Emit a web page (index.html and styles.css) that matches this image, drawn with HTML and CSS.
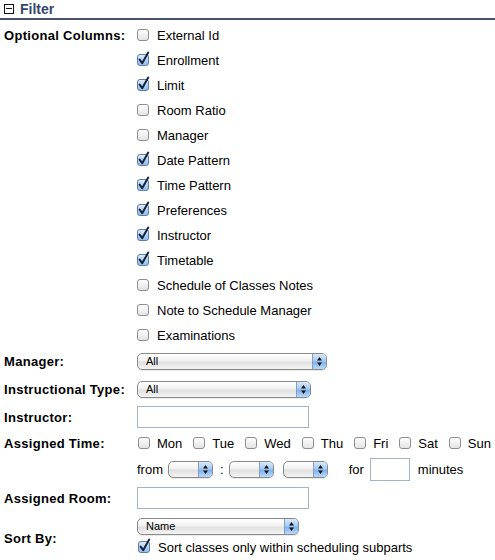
FILE: index.html
```html
<!DOCTYPE html>
<html>
<head>
<meta charset="utf-8">
<link rel="stylesheet" href="styles.css">
</head>
<body>
<svg class="defs" width="0" height="0">
  <defs>
    <linearGradient id="gOff" x1="0" y1="0" x2="0" y2="1">
      <stop offset="0" stop-color="#ffffff"/>
      <stop offset="1" stop-color="#e2e2e2"/>
    </linearGradient>
    <linearGradient id="gOn" x1="0" y1="0" x2="0" y2="1">
      <stop offset="0" stop-color="#e4effb"/>
      <stop offset="0.5" stop-color="#b5d2f1"/>
      <stop offset="1" stop-color="#8ebbec"/>
    </linearGradient>
    <symbol id="cbOff" viewBox="0 0 12 12">
      <rect x="0.5" y="0.5" width="11" height="11" rx="2.5" fill="url(#gOff)" stroke="#8e8e8e"/>
    </symbol>
    <symbol id="cbOn" viewBox="0 0 12 12" overflow="visible">
      <rect x="0.5" y="0.5" width="11" height="11" rx="2.5" fill="url(#gOn)" stroke="#5e7ea8"/>
      <path d="M2.6 5.6 L5.2 9.2 L11.2 -1.4" fill="none" stroke="#16233f" stroke-width="2" stroke-linecap="round" stroke-linejoin="round"/>
    </symbol>
    <symbol id="arrows" viewBox="0 0 7 11">
      <path d="M3.5 1 L6 4.5 L1 4.5 Z M3.5 10 L6 6.5 L1 6.5 Z" fill="#111"/>
    </symbol>
  </defs>
</svg>

<div class="header">
  <span class="toggle"><span class="minus"></span></span>
  <span class="title">Filter</span>
</div>

<div class="form">
  <div class="lbl lbl-top">Optional Columns:</div>
  <div class="opts">
    <div class="opt"><svg class="cb"><use href="#cbOff"/></svg><span>External Id</span></div>
    <div class="opt"><svg class="cb"><use href="#cbOn"/></svg><span>Enrollment</span></div>
    <div class="opt"><svg class="cb"><use href="#cbOn"/></svg><span>Limit</span></div>
    <div class="opt"><svg class="cb"><use href="#cbOff"/></svg><span>Room Ratio</span></div>
    <div class="opt"><svg class="cb"><use href="#cbOff"/></svg><span>Manager</span></div>
    <div class="opt"><svg class="cb"><use href="#cbOn"/></svg><span>Date Pattern</span></div>
    <div class="opt"><svg class="cb"><use href="#cbOn"/></svg><span>Time Pattern</span></div>
    <div class="opt"><svg class="cb"><use href="#cbOn"/></svg><span>Preferences</span></div>
    <div class="opt"><svg class="cb"><use href="#cbOn"/></svg><span>Instructor</span></div>
    <div class="opt"><svg class="cb"><use href="#cbOn"/></svg><span>Timetable</span></div>
    <div class="opt"><svg class="cb"><use href="#cbOff"/></svg><span>Schedule of Classes Notes</span></div>
    <div class="opt"><svg class="cb"><use href="#cbOff"/></svg><span>Note to Schedule Manager</span></div>
    <div class="opt"><svg class="cb"><use href="#cbOff"/></svg><span>Examinations</span></div>
  </div>

  <div class="lbl row28">Manager:</div>
  <div class="val row28">
    <div class="sel w-manager"><span class="sel-text">All</span><span class="sel-btn"><svg class="arr"><use href="#arrows"/></svg></span></div>
  </div>

  <div class="lbl row28">Instructional Type:</div>
  <div class="val row28">
    <div class="sel w-itype"><span class="sel-text">All</span><span class="sel-btn"><svg class="arr"><use href="#arrows"/></svg></span></div>
  </div>

  <div class="lbl row28">Instructor:</div>
  <div class="val row28"><div class="txt w-wide"></div></div>

  <div class="lbl lbl-time">Assigned Time:</div>
  <div class="val-col">
    <div class="days">
      <span class="day"><svg class="cb"><use href="#cbOff"/></svg>Mon</span>
      <span class="day"><svg class="cb"><use href="#cbOff"/></svg>Tue</span>
      <span class="day"><svg class="cb"><use href="#cbOff"/></svg>Wed</span>
      <span class="day"><svg class="cb"><use href="#cbOff"/></svg>Thu</span>
      <span class="day"><svg class="cb"><use href="#cbOff"/></svg>Fri</span>
      <span class="day"><svg class="cb"><use href="#cbOff"/></svg>Sat</span>
      <span class="day"><svg class="cb"><use href="#cbOff"/></svg>Sun</span>
    </div>
    <div class="from">
      <span>from</span>
      <div class="sel w-small"><span class="sel-text"></span><span class="sel-btn"><svg class="arr"><use href="#arrows"/></svg></span></div>
      <span class="colon">:</span>
      <div class="sel w-small"><span class="sel-text"></span><span class="sel-btn"><svg class="arr"><use href="#arrows"/></svg></span></div>
      <div class="sel w-small gap-l"><span class="sel-text"></span><span class="sel-btn"><svg class="arr"><use href="#arrows"/></svg></span></div>
      <span class="for">for</span>
      <div class="txt w-min"></div>
      <span class="minutes">minutes</span>
    </div>
  </div>

  <div class="lbl row30">Assigned Room:</div>
  <div class="val row30"><div class="txt w-wide"></div></div>

  <div class="lbl lbl-sort">Sort By:</div>
  <div class="val-col sort">
    <div class="sel w-sort"><span class="sel-text">Name</span><span class="sel-btn"><svg class="arr"><use href="#arrows"/></svg></span></div>
    <div class="opt-sort"><svg class="cb"><use href="#cbOn"/></svg><span>Sort classes only within scheduling subparts</span></div>
  </div>
</div>
</body>
</html>
```

FILE: styles.css
```css
html, body {
  background: #ffffff;
}
body {
  margin: 0;
  padding: 0 0 0 4px;
  font-family: "Liberation Sans", Arial, sans-serif;
  font-size: 13px;
  color: #000;
}
.defs {
  position: absolute;
  width: 0;
  height: 0;
}
.header {
  display: flex;
  align-items: center;
  gap: 6px;
  height: 18px;
  border-bottom: 2px solid #44556b;
  margin-left: -4px;
  padding-left: 4px;
}
.toggle {
  width: 10px;
  height: 10px;
  box-sizing: border-box;
  border: 1px solid #111;
  display: flex;
  align-items: center;
  justify-content: center;
  margin-top: -1px;
}
.minus {
  width: 6px;
  height: 1px;
  background: #111;
}
.title {
  font-weight: bold;
  font-size: 14px;
  color: #34476a;
}
.form {
  display: grid;
  grid-template-columns: 133px 1fr;
  margin-top: 2px;
}
.lbl {
  font-weight: bold;
  letter-spacing: 0.3px;
  display: flex;
  align-items: center;
  white-space: nowrap;
}
.lbl-top {
  align-self: start;
  height: 25px;
  padding-top: 1px;
  box-sizing: border-box;
}
.opts {
  display: flex;
  flex-direction: column;
}
.opt {
  height: 25px;
  display: flex;
  align-items: center;
  gap: 8px;
  padding-top: 1px;
  box-sizing: border-box;
}
.cb {
  width: 12px;
  height: 12px;
  flex: none;
  overflow: visible;
}
.row28 { height: 28px; }
.row30 { height: 30px; }
.val {
  display: flex;
  align-items: center;
}
.sel {
  height: 17px;
  box-sizing: border-box;
  border: 1px solid #8a8a8a;
  border-radius: 5px;
  background: linear-gradient(#ffffff, #f1f1f1 45%, #e0e0e0 55%, #f4f4f4);
  display: flex;
  align-items: stretch;
  overflow: hidden;
  box-shadow: 0 1px 0 rgba(0,0,0,0.08);
}
.sel-text {
  flex: 1;
  font-size: 11px;
  line-height: 15px;
  padding-left: 8px;
}
.sel-btn {
  width: 13px;
  border-left: 1px solid #8a9cb8;
  background: linear-gradient(#d8e8fb, #a7cbf3 45%, #7fb2ec 55%, #b9d9fb);
  display: flex;
  align-items: center;
  justify-content: center;
}
.arr {
  width: 7px;
  height: 11px;
}
.w-manager { width: 190px; }
.w-itype { width: 174px; }
.w-sort { width: 162px; }
.w-small { width: 45px; }
.txt {
  height: 22px;
  box-sizing: border-box;
  border: 1px solid #a5b3c9;
  background: #fff;
}
.w-wide { width: 172px; }
.w-min { width: 40px; height: 23px; }
.lbl-time {
  align-self: start;
  height: 24px;
}
.val-col {
  display: flex;
  flex-direction: column;
}
.days {
  height: 24px;
  display: flex;
  align-items: center;
  gap: 11px;
  padding-left: 1px;
}
.day {
  display: flex;
  align-items: center;
  gap: 7px;
}
.from {
  height: 28px;
  display: flex;
  align-items: center;
}
.from .sel {
  margin-left: 5px;
}
.colon {
  margin-left: 7px;
  margin-right: 0;
}
.from .gap-l {
  margin-left: 9px;
}
.for {
  margin-left: 21px;
  margin-right: 6px;
}
.minutes {
  margin-left: 8px;
}
.lbl-sort {
  padding-top: 4px;
}
.sort {
  padding-top: 5px;
  padding-bottom: 4px;
}
.opt-sort {
  height: 18px;
  margin-top: 3px;
  display: flex;
  align-items: center;
  gap: 8px;
  padding-left: 1px;
}
```
